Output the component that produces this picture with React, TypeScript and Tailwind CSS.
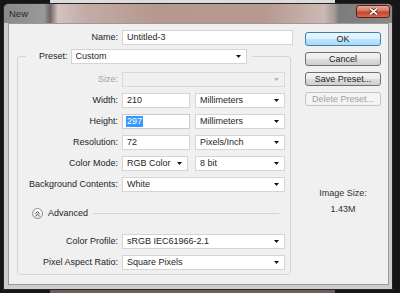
import React from 'react';

const Arrow = ({ color = '#111' }: { color?: string }) => (
  <svg width="5" height="3" viewBox="0 0 5 3" className="shrink-0">
    <path d="M0 0h5L2.5 3z" fill={color} />
  </svg>
);

const Select = ({ value, w, disabled }: { value: string; w: string; disabled?: boolean }) => (
  <div
    className={`${w} h-[15px] flex items-center justify-between pl-[4px] pr-[5px] border ${
      disabled ? 'bg-[#f0f0f0] border-[#d9d9d9]' : 'bg-white border-[#d4d4d4]'
    }`}
  >
    <span className="truncate">{value}</span>
    <Arrow color={disabled ? '#b0b0b0' : '#111'} />
  </div>
);

const Field = ({ children, w }: { children: React.ReactNode; w: string }) => (
  <div className={`${w} h-[15px] flex items-center pl-[4px] bg-white border border-[#d4d4d4]`}>{children}</div>
);

const Row = ({ label, children, dim }: { label: string; children: React.ReactNode; dim?: boolean }) => (
  <div className="flex items-center h-[15px] gap-[4px]">
    <span className={`w-[100px] text-right ${dim ? 'text-[#a3a3a3]' : ''}`}>{label}</span>
    {children}
  </div>
);

const Button = ({ label, primary, disabled }: { label: string; primary?: boolean; disabled?: boolean }) => {
  let cls = 'border-[#707070] bg-[linear-gradient(#f3f3f3,#ebebeb_50%,#dddddd_51%,#cfcfcf)] text-[#1e1e1e]';
  if (primary) cls = 'border-[#3c7fb1] bg-[linear-gradient(#eaf6fd,#d9f0fc_50%,#bee6fd_51%,#a7d9f5)] text-[#1e1e1e]';
  if (disabled) cls = 'border-[#c2c4c6] bg-[#f4f4f4] text-[#a0a0a0]';
  return (
    <div className={`w-[76px] h-[14px] flex items-center justify-center rounded-[3px] border ${cls}`}>{label}</div>
  );
};

export default function App() {
  return (
    <div
      className="w-[400px] h-[293px] bg-[#161616] flex flex-col overflow-hidden text-[9px] leading-[11px] text-[#1e1e1e]"
      style={{ fontFamily: '"Liberation Sans", Arial, sans-serif' }}
    >
      <div className="h-[3px] flex">
        <div className="w-[50px]" />
        <div className="w-[285px] bg-[#dcdcdc]" />
      </div>

      {/* window */}
      <div className="ml-[3px] w-[390px] h-[287px] border border-[#262626] rounded-t-[6px] bg-[#cdcdcd] flex flex-col overflow-hidden">
        <div className="h-[19px] flex items-start justify-between bg-[linear-gradient(90deg,#8a8a8a_0px,#9a9a9a_40px,#6c6464_46px,#d2c3bf_54px,#c3ada8_80px,#b6988f_150px,#b7998f_260px,#cbb8b4_320px,#a89a98_330px,#7c7b7b_335px,#8a8a8a_390px)]">
          <span className="pl-[5px] pt-[4px] text-[#2a2a2a] text-[9.5px]">New</span>
          <div className="mt-[1px] mr-[2px] w-[34px] h-[13px] rounded-[3px] border border-[#5a2017] bg-[linear-gradient(#e9a897,#d7725d_45%,#c5432d_55%,#d8684f)] flex items-center justify-center">
            <svg width="9" height="7" viewBox="0 0 9 7">
              <path d="M1 0.5L8 6.5M8 0.5L1 6.5" stroke="#3a1a14" strokeWidth="3" />
              <path d="M1 0.5L8 6.5M8 0.5L1 6.5" stroke="#fff" strokeWidth="1.7" />
            </svg>
          </div>
        </div>

        <div className="mx-[4px] w-[381px] h-[262px] bg-[#f0f0f0] border border-[#9a9a9a] flex">
          {/* left column */}
          <div className="w-[284px] pt-[6px] flex flex-col">
            <div className="flex items-center h-[15px] gap-[4px]">
              <span className="w-[109px] text-right">Name:</span>
              <Field w="w-[171px]">Untitled-3</Field>
            </div>

            <fieldset className="mt-[4px] ml-[8px] w-[274px] border border-[#d5d5d5] rounded-[3px]">
              <legend className="ml-[8px] pl-[13px] pr-[5px] flex items-center gap-[3px]">
                <span>Preset:</span>
                <Select value="Custom" w="w-[176px]" />
              </legend>
              <div className="pt-[8px] pb-[4px] flex flex-col">
                <div className="flex flex-col gap-[6px]">
                  <Row label="Size:" dim>
                    <Select value="" w="w-[163px]" disabled />
                  </Row>
                  <Row label="Width:">
                    <Field w="w-[68px]">210</Field>
                    <div className="ml-[1px]">
                      <Select value="Millimeters" w="w-[90px]" />
                    </div>
                  </Row>
                  <Row label="Height:">
                    <div className="w-[68px] h-[15px] flex items-center pl-[3px] bg-white border border-[#c9c9c9]">
                      <span className="bg-[#3399ff] text-white px-[1px]">297</span>
                    </div>
                    <div className="ml-[1px]">
                      <Select value="Millimeters" w="w-[90px]" />
                    </div>
                  </Row>
                  <Row label="Resolution:">
                    <Field w="w-[68px]">72</Field>
                    <div className="ml-[1px]">
                      <Select value="Pixels/Inch" w="w-[90px]" />
                    </div>
                  </Row>
                  <Row label="Color Mode:">
                    <Select value="RGB Color" w="w-[66px]" />
                    <div className="ml-[3px]">
                      <Select value="8 bit" w="w-[90px]" />
                    </div>
                  </Row>
                  <Row label="Background Contents:">
                    <Select value="White" w="w-[163px]" />
                  </Row>
                </div>

                <div className="mt-[16px] h-[11px] pl-[14px] flex items-center">
                  <div className="w-[11px] h-[11px] rounded-full border border-[#8f8f8f] bg-[linear-gradient(#ffffff,#e4e4e4)] flex items-center justify-center">
                    <svg width="5" height="6" viewBox="0 0 5 6">
                      <path d="M0.5 2.5L2.5 0.8L4.5 2.5M0.5 5L2.5 3.3L4.5 5" stroke="#333" strokeWidth="0.9" fill="none" />
                    </svg>
                  </div>
                  <span className="ml-[5px]">Advanced</span>
                  <div className="ml-[5px] mr-[11px] flex-1 h-px bg-[#d5d5d5]" />
                </div>

                <div className="mt-[15px] flex flex-col gap-[6px]">
                  <Row label="Color Profile:">
                    <Select value="sRGB IEC61966-2.1" w="w-[163px]" />
                  </Row>
                  <Row label="Pixel Aspect Ratio:">
                    <Select value="Square Pixels" w="w-[163px]" />
                  </Row>
                </div>
              </div>
            </fieldset>
          </div>

          {/* right column */}
          <div className="ml-[12px] pt-[8px] flex flex-col gap-[6px]">
            <Button label="OK" primary />
            <Button label="Cancel" />
            <Button label="Save Preset..." />
            <Button label="Delete Preset..." disabled />
            <div className="mt-[76px] flex flex-col items-center gap-[5px] text-[#333]">
              <span>Image Size:</span>
              <span>1.43M</span>
            </div>
          </div>
        </div>
      </div>

      <div className="flex-1 flex">
        <div className="w-[50px]" />
        <div className="w-[285px] bg-[#6e5c59]" />
      </div>
    </div>
  );
}
